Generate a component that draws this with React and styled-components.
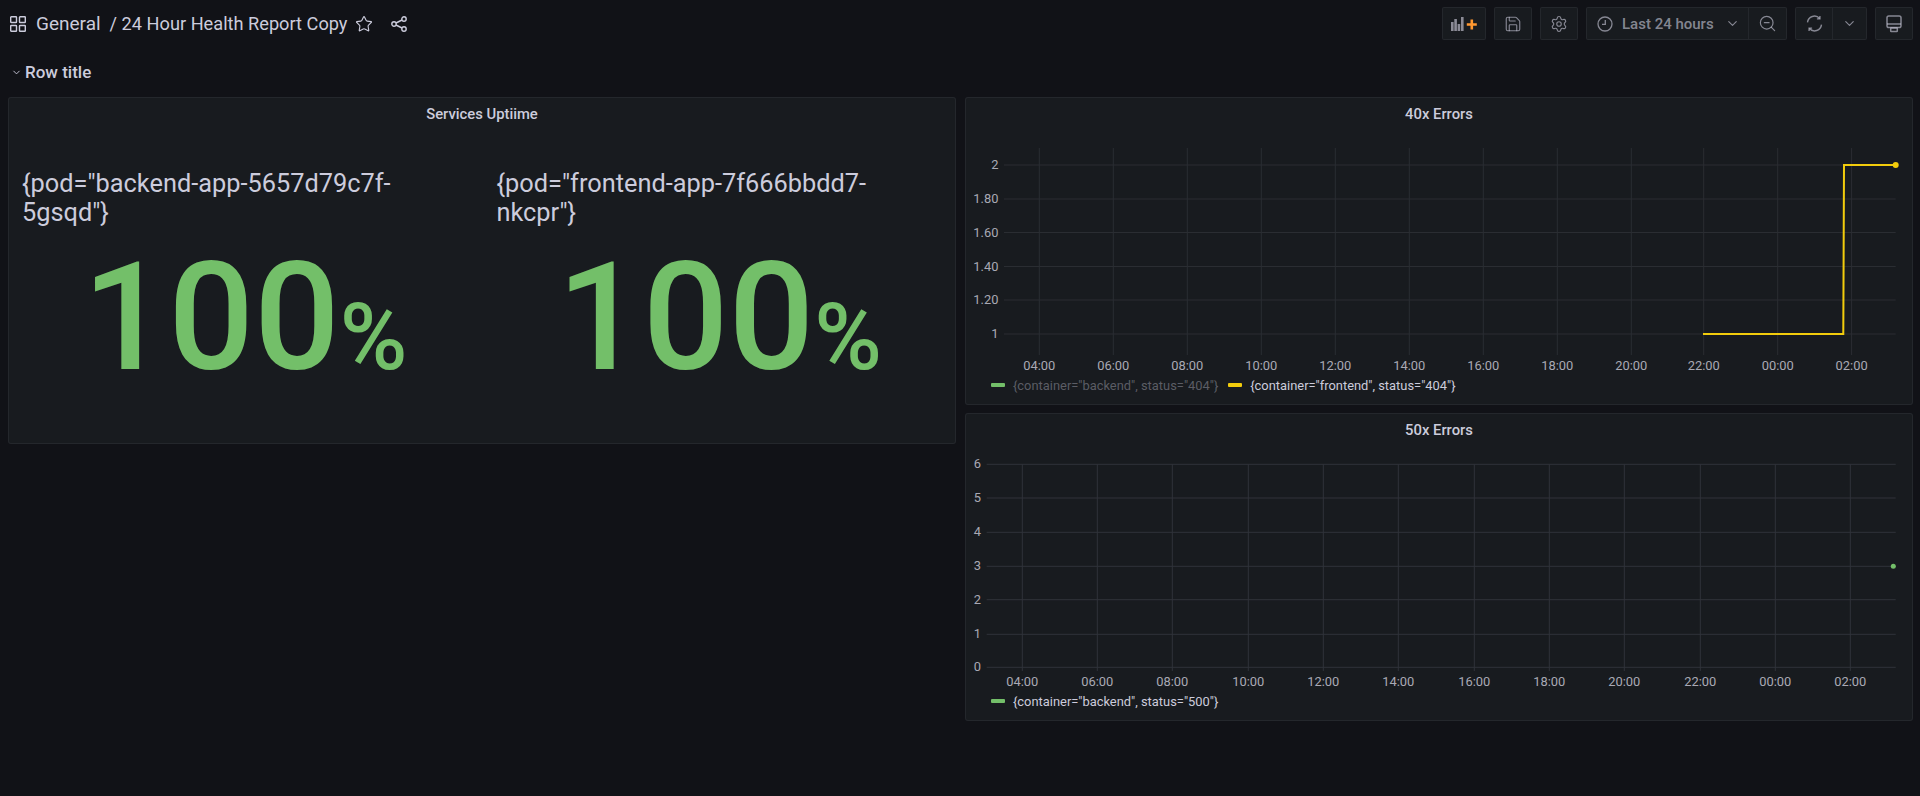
import React from "react";
import styled, { createGlobalStyle } from "styled-components";
import { Star, Save, Settings, ZoomOut, ChevronDown } from "lucide-react";

const Global = createGlobalStyle`
  html, body { margin: 0; padding: 0; background: #111217; }
  body { font-family: Roboto, "Liberation Sans", sans-serif; color: #ccccdc; overflow: hidden; }
  * { box-sizing: border-box; }
`;

const Page = styled.div`
  width: 1920px;
  height: 796px;
  padding-top: 7px;
  background: #111217;
`;

const TopBar = styled.header`
  display: flex;
  align-items: center;
  justify-content: space-between;
  height: 33px;
  padding: 0 7px 0 10px;
`;

const TitleGroup = styled.div`
  display: flex;
  align-items: center;
  color: #ccccdc;
  line-height: 22px;
`;

const Crumb = styled.span`
  margin-left: ${(p) => p.$ml}px;
  font-size: ${(p) => p.$fs}px;
  white-space: nowrap;
`;

const NavIcon = styled.span`
  display: inline-flex;
  margin-left: ${(p) => p.$ml || 0}px;
  color: #ccccdc;
`;

const Toolbar = styled.div`
  display: flex;
  gap: 8px;
`;

const ToolGroup = styled.div`
  display: flex;
  height: 33px;
  width: ${(p) => p.$w}px;
  background: #181b1f;
  border: 1px solid rgba(204, 204, 220, 0.07);
  border-radius: 2px;
  color: rgba(204, 204, 220, 0.62);
`;

const ToolCell = styled.div`
  display: flex;
  align-items: center;
  justify-content: ${(p) => (p.$start ? "flex-start" : "center")};
  flex: ${(p) => (p.$w ? `0 0 ${p.$w}px` : "1")};
  padding-left: ${(p) => p.$pl || 0}px;
  border-left: ${(p) => (p.$divide ? "1px solid rgba(204,204,220,0.07)" : "none")};
`;

const TimeLabel = styled.span`
  font-size: 15px;
  font-weight: 500;
  margin: 0 11px 0 9px;
  white-space: nowrap;
`;

const RowHeader = styled.div`
  display: flex;
  align-items: center;
  height: 30px;
  margin: 17px 0 10px;
  padding-left: 11px;
  font-size: 17px;
  font-weight: 500;
  color: #ccccdc;
`;

const RowTitle = styled.span`
  margin-left: 3px;
`;

const Grid = styled.main`
  display: grid;
  grid-template-columns: 948px 948px;
  column-gap: 9px;
  align-items: start;
  padding-left: 8px;
`;

const Column = styled.div`
  display: flex;
  flex-direction: column;
  gap: 8px;
`;

const Panel = styled.section`
  display: flex;
  flex-direction: column;
  height: ${(p) => p.$h}px;
  background: #181b1f;
  border: 1px solid rgba(204, 204, 220, 0.07);
  border-radius: 3px;
`;

const PanelTitle = styled.h2`
  margin: 0;
  height: 29px;
  line-height: 32px;
  text-align: center;
  font-size: 14.8px;
  font-weight: 500;
  color: #ccccdc;
`;

const StatRow = styled.div`
  display: grid;
  grid-template-columns: 454px 454px;
  column-gap: 20.5px;
  padding: 41.5px 0 0 13px;
`;

const StatItem = styled.div`
  display: flex;
  flex-direction: column;
`;

const StatName = styled.div`
  max-width: 440px;
  font-size: 25.35px;
  line-height: 29px;
  height: 58px;
  color: #ccccdc;
`;

const StatValue = styled.div`
  margin-top: 15.5px;
  padding-right: 8px;
  text-align: center;
  font-size: 151px;
  line-height: 151px;
  font-weight: 500;
  color: #73bf69;
  white-space: nowrap;
`;

const StatUnit = styled.span`
  font-size: 92px;
`;

const ChartSvg = styled.svg`
  display: block;
  width: 946px;
  height: 248px;
  font-family: Roboto, "Liberation Sans", sans-serif;
  font-size: 12.9px;
`;

const Legend = styled.div`
  display: flex;
  align-items: center;
  height: 20px;
  padding-left: 25px;
  font-size: 12.9px;
`;

const LegendItem = styled.div`
  display: flex;
  align-items: center;
  margin-right: 10px;
  color: ${(p) => (p.$dim ? "rgba(204,204,220,0.38)" : "#ccccdc")};
  white-space: nowrap;
`;

const Swatch = styled.span`
  width: 14px;
  height: 4px;
  border-radius: 1px;
  margin-right: 8px;
  background: ${(p) => p.$color};
`;

const AppsIcon = () => (
  <svg width="16" height="16" viewBox="0 0 16 16" fill="none" stroke="currentColor" strokeWidth="1.4">
    <rect x="0.7" y="0.7" width="5.8" height="5.8" rx="0.6" />
    <rect x="9.5" y="0.7" width="5.8" height="5.8" rx="0.6" />
    <rect x="0.7" y="9.5" width="5.8" height="5.8" rx="0.6" />
    <rect x="9.5" y="9.5" width="5.8" height="5.8" rx="0.6" />
  </svg>
);

const ShareIcon = () => (
  <svg width="16" height="16" viewBox="0 0 16 16" fill="none" stroke="currentColor" strokeWidth="1.4">
    <circle cx="3" cy="8" r="2.2" />
    <circle cx="13" cy="3" r="2.2" />
    <circle cx="13" cy="13" r="2.2" />
    <path d="M5 7 11 4M5 9l6 3" />
  </svg>
);

const AddPanelIcon = () => (
  <svg width="26" height="14" viewBox="0 0 26 14">
    <g fill="#8b8b96">
      <rect x="0" y="5" width="2.6" height="9" />
      <rect x="3.3" y="2" width="2.6" height="12" />
      <rect x="6.6" y="7" width="2.6" height="7" />
      <rect x="10" y="0" width="2.6" height="14" />
    </g>
    <path d="M20.8 2.5v10M15.8 7.5h10" stroke="#ff9830" strokeWidth="2.6" />
  </svg>
);

const ClockIcon = () => (
  <svg width="16" height="16" viewBox="0 0 16 16" fill="none" stroke="currentColor" strokeWidth="1.3">
    <circle cx="8" cy="8" r="7" />
    <path d="M8.3 4v4.4H5" />
  </svg>
);

const SyncIcon = () => (
  <svg width="17" height="17" viewBox="0 0 17 17" fill="none" stroke="currentColor" strokeWidth="1.4">
    <path d="M1.5 7.4A7 7 0 0 1 13.6 3.4M15.5 9.6A7 7 0 0 1 3.4 13.6" />
    <path d="M13.9.9v3h-3M3.1 16.1v-3h3" />
  </svg>
);

const MonitorIcon = () => (
  <svg width="18" height="18" viewBox="0 0 18 18" fill="none" stroke="currentColor" strokeWidth="1.5">
    <rect x="2" y="1" width="14" height="11.5" rx="1.8" />
    <path d="M2 9h14" />
    <rect x="5.7" y="13" width="6.6" height="3.6" rx="0.6" />
  </svg>
);

const TICK = "#a9a9b4";
const HOURS = ["04:00", "06:00", "08:00", "10:00", "12:00", "14:00", "16:00", "18:00", "20:00", "22:00", "00:00", "02:00"];

const errors40 = {
  viewBox: "966 127 946 248",
  grid: "#2a2d32",
  left: 1004,
  right: 1895.7,
  top: 148,
  bottom: 355,
  xs: [1039.3, 1113.3, 1187.3, 1261.3, 1335.3, 1409.3, 1483.3, 1557.3, 1631.3, 1703.7, 1777.7, 1851.6],
  ys: [
    ["2", 165],
    ["1.80", 199],
    ["1.60", 232.5],
    ["1.40", 266.5],
    ["1.20", 300],
    ["1", 334],
  ],
  labelEnd: 998.5,
  xLabelY: 369.5,
};

const errors50 = {
  viewBox: "966 443 946 248",
  grid: "#30333a",
  left: 986.7,
  right: 1895.7,
  top: 464.3,
  bottom: 671,
  xs: [1022.3, 1097.3, 1172.3, 1248.3, 1323.3, 1398.3, 1474.3, 1549.3, 1624.3, 1700.3, 1775.3, 1850.3],
  ys: [
    ["6", 464.3],
    ["5", 498],
    ["4", 532.3],
    ["3", 566.3],
    ["2", 599.7],
    ["1", 634.3],
    ["0", 667.3],
  ],
  labelEnd: 981,
  xLabelY: 686,
};

const Chart = ({ spec, children }) => (
  <ChartSvg viewBox={spec.viewBox}>
    {spec.xs.map((x) => (
      <line key={x} x1={x} x2={x} y1={spec.top} y2={spec.bottom} stroke={spec.grid} />
    ))}
    {spec.ys.map(([label, y]) => (
      <g key={label}>
        <line x1={spec.left} x2={spec.right} y1={y} y2={y} stroke={spec.grid} />
        <text x={spec.labelEnd} y={y + 4} textAnchor="end" fill={TICK}>{label}</text>
      </g>
    ))}
    {spec.xs.map((x, i) => (
      <text key={x} x={x} y={spec.xLabelY} textAnchor="middle" fill={TICK}>{HOURS[i]}</text>
    ))}
    {children}
  </ChartSvg>
);

export default function App() {
  return (
    <Page>
      <Global />
      <TopBar>
        <TitleGroup>
          <NavIcon><AppsIcon /></NavIcon>
          <Crumb $ml={10} $fs={19}>General</Crumb>
          <Crumb $ml={9} $fs={18.2}>/ 24 Hour Health Report Copy</Crumb>
          <NavIcon $ml={8}><Star size={18} strokeWidth={1.5} /></NavIcon>
          <NavIcon $ml={18}><ShareIcon /></NavIcon>
        </TitleGroup>
        <Toolbar>
          <ToolGroup $w={44}>
            <ToolCell><AddPanelIcon /></ToolCell>
          </ToolGroup>
          <ToolGroup $w={38}>
            <ToolCell><Save size={18} strokeWidth={1.5} /></ToolCell>
          </ToolGroup>
          <ToolGroup $w={38}>
            <ToolCell><Settings size={18} strokeWidth={1.5} /></ToolCell>
          </ToolGroup>
          <ToolGroup $w={201}>
            <ToolCell $start $pl={10}>
              <ClockIcon />
              <TimeLabel>Last 24 hours</TimeLabel>
              <ChevronDown size={15} strokeWidth={1.8} />
            </ToolCell>
            <ToolCell $w={38} $divide><ZoomOut size={19} strokeWidth={1.5} /></ToolCell>
          </ToolGroup>
          <ToolGroup $w={72}>
            <ToolCell $w={36}><SyncIcon /></ToolCell>
            <ToolCell $divide><ChevronDown size={15} strokeWidth={1.8} /></ToolCell>
          </ToolGroup>
          <ToolGroup $w={38}>
            <ToolCell><MonitorIcon /></ToolCell>
          </ToolGroup>
        </Toolbar>
      </TopBar>
      <RowHeader>
        <ChevronDown size={11} strokeWidth={2} />
        <RowTitle>Row title</RowTitle>
      </RowHeader>
      <Grid>
        <Panel $h={347}>
          <PanelTitle>Services Uptiime</PanelTitle>
          <StatRow>
            <StatItem>
              <StatName>{'{pod="backend-app-5657d79c7f-5gsqd"}'}</StatName>
              <StatValue>100<StatUnit>%</StatUnit></StatValue>
            </StatItem>
            <StatItem>
              <StatName>{'{pod="frontend-app-7f666bbdd7-nkcpr"}'}</StatName>
              <StatValue>100<StatUnit>%</StatUnit></StatValue>
            </StatItem>
          </StatRow>
        </Panel>
        <Column>
          <Panel $h={308}>
            <PanelTitle>40x Errors</PanelTitle>
            <Chart spec={errors40}>
              <path d="M1703 334H1843.3L1844 165H1895.7" fill="none" stroke="#f2cc0c" strokeWidth="2" />
              <circle cx="1895.7" cy="165" r="3" fill="#f2cc0c" />
            </Chart>
            <Legend>
              <LegendItem $dim><Swatch $color="#73bf69" />{'{container="backend", status="404"}'}</LegendItem>
              <LegendItem><Swatch $color="#f2cc0c" />{'{container="frontend", status="404"}'}</LegendItem>
            </Legend>
          </Panel>
          <Panel $h={308}>
            <PanelTitle>50x Errors</PanelTitle>
            <Chart spec={errors50}>
              <circle cx="1893.3" cy="566.3" r="2.5" fill="#73bf69" />
            </Chart>
            <Legend>
              <LegendItem><Swatch $color="#73bf69" />{'{container="backend", status="500"}'}</LegendItem>
            </Legend>
          </Panel>
        </Column>
      </Grid>
    </Page>
  );
}
